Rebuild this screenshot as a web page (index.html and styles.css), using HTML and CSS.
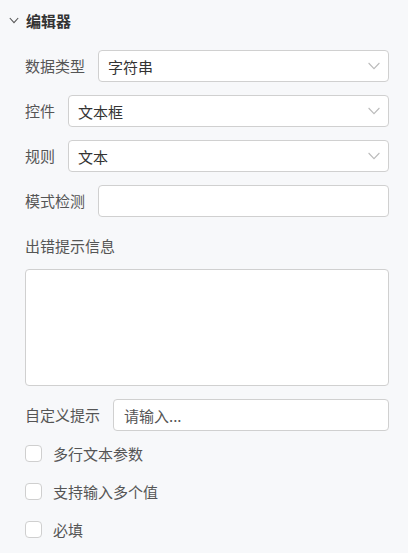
FILE: index.html
```html
<!DOCTYPE html>
<html lang="zh">
<head>
<meta charset="utf-8">
<link rel="stylesheet" href="styles.css">
</head>
<body>
<div class="panel">
  <div class="header">
    <svg class="caret" width="10" height="7" viewBox="0 0 10 7"><path d="M0.8 1 L5 5.6 L9.2 1" fill="none" stroke="#555" stroke-width="1.1"/></svg>
    <span class="title">编辑器</span>
  </div>

  <div class="row">
    <label class="label">数据类型</label>
    <div class="field select"><span class="value">字符串</span><svg class="arrow" width="12" height="8" viewBox="0 0 12 8"><path d="M0.6 1 L6 6.6 L11.4 1" fill="none" stroke="#bbb" stroke-width="1.1"/></svg></div>
  </div>
  <div class="row">
    <label class="label">控件</label>
    <div class="field select"><span class="value">文本框</span><svg class="arrow" width="12" height="8" viewBox="0 0 12 8"><path d="M0.6 1 L6 6.6 L11.4 1" fill="none" stroke="#bbb" stroke-width="1.1"/></svg></div>
  </div>
  <div class="row">
    <label class="label">规则</label>
    <div class="field select"><span class="value">文本</span><svg class="arrow" width="12" height="8" viewBox="0 0 12 8"><path d="M0.6 1 L6 6.6 L11.4 1" fill="none" stroke="#bbb" stroke-width="1.1"/></svg></div>
  </div>
  <div class="row">
    <label class="label">模式检测</label>
    <div class="field"></div>
  </div>

  <div class="block-label">出错提示信息</div>
  <div class="textarea"></div>

  <div class="row">
    <label class="label">自定义提示</label>
    <div class="field"><span class="placeholder">请输入...</span></div>
  </div>

  <div class="check"><span class="box"></span><span class="check-text">多行文本参数</span></div>
  <div class="check"><span class="box"></span><span class="check-text">支持输入多个值</span></div>
  <div class="check"><span class="box"></span><span class="check-text">必填</span></div>
</div>
</body>
</html>
```

FILE: styles.css
```css
html, body {
  margin: 0;
  padding: 0;
  background: #f7f8fa;
}
body {
  font-family: "Noto Sans CJK SC", "Noto Sans", sans-serif;
  font-size: 15px;
  color: #555;
}
.panel {
  padding: 0 19px 0 25px;
}
.header {
  height: 40px;
  display: flex;
  align-items: center;
  margin-left: -16px;
}
.caret {
  margin-right: 7px;
  margin-top: 1px;
}
.title {
  font-weight: bold;
  color: #333;
  font-size: 15px;
}
.row {
  display: flex;
  align-items: center;
  height: 32px;
  margin-top: 13px;
}
.header + .row {
  margin-top: 10px;
}
.label {
  color: #555;
  margin-right: 13px;
  white-space: nowrap;
  line-height: 20px;
}
.field {
  flex: 1;
  height: 32px;
  box-sizing: border-box;
  border: 1px solid #d0d0d0;
  border-radius: 4px;
  background: #fff;
  display: flex;
  align-items: center;
  padding: 0 8px 0 9px;
}
.select {
  justify-content: space-between;
}
.value {
  color: #333;
  font-size: 15px;
}
.placeholder {
  color: #555;
  font-size: 15px;
  padding-left: 1px;
}
.arrow {
  display: block;
}
.block-label {
  margin-top: 18px;
  line-height: 22px;
  color: #555;
}
.textarea {
  margin-top: 12px;
  height: 117px;
  box-sizing: border-box;
  border: 1px solid #d0d0d0;
  border-radius: 4px;
  background: #fff;
}
.textarea + .row {
  margin-top: 13px;
}
.check {
  display: flex;
  align-items: center;
  height: 24px;
  margin-top: 14px;
}
.row + .check {
  margin-top: 10px;
}
.box {
  width: 17px;
  height: 17px;
  box-sizing: border-box;
  border: 1px solid #cfcfcf;
  border-radius: 4px;
  background: #fff;
  margin-right: 11px;
}
.check-text {
  color: #555;
}
```
